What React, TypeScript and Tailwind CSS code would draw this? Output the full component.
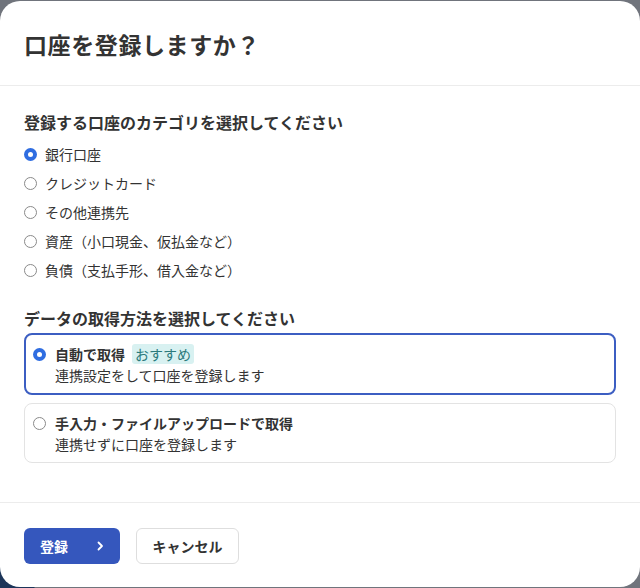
import React from 'react';

const font = { fontFamily: '"Noto Sans CJK JP", "Noto Sans", sans-serif' };

const Radio: React.FC<{ checked?: boolean }> = ({ checked }) => (
  <span
    className={
      checked
        ? 'flex h-[13px] w-[13px] shrink-0 items-center justify-center rounded-full bg-[#2f6de1]'
        : 'flex h-[13px] w-[13px] shrink-0 items-center justify-center rounded-full border border-[#8a8a8a] bg-white'
    }
  >
    {checked && <span className="h-[5px] w-[5px] rounded-full bg-white" />}
  </span>
);

const categories = [
  '銀行口座',
  'クレジットカード',
  'その他連携先',
  '資産（小口現金、仮払金など）',
  '負債（支払手形、借入金など）',
];

const App: React.FC = () => {
  return (
    <div
      className="h-[588px] w-[640px] bg-[radial-gradient(circle_at_0%_100%,#1c3559_34px,#70747c_35px)] pt-px"
      style={font}
    >
      <div className="flex h-[586px] flex-col rounded-[20px] bg-white text-[#333]">
        <div className="border-b border-[#ececec] px-6 pb-[23px] pt-[25px]">
          <h1 className="text-[23px] font-bold leading-[36px] tracking-[0.6px]">口座を登録しますか？</h1>
        </div>

        <div className="flex-1 px-6 pt-[24px]">
          <h2 className="text-[16px] font-bold leading-[24px]">登録する口座のカテゴリを選択してください</h2>
          <div className="mt-[6px] flex flex-col">
            {categories.map((c, i) => (
              <label key={c} className="flex h-[29px] items-center gap-[8px] text-[14px]">
                <Radio checked={i === 0} />
                <span>{c}</span>
              </label>
            ))}
          </div>

          <h2 className="mt-[21px] text-[16px] font-bold leading-[24px]">データの取得方法を選択してください</h2>
          <div className="mt-[3px] flex flex-col gap-[8px]">
            <div className="flex h-[62px] gap-[9px] rounded-[8px] border-2 border-[#3c5ec2] px-[7px] pt-[9px]">
              <div className="pt-[4px]">
                <Radio checked />
              </div>
              <div>
                <div className="flex items-center gap-[7px]">
                  <span className="text-[14px] font-bold leading-[20px]">自動で取得</span>
                  <span className="rounded-[3px] bg-[#d8f1f1] px-[3px] text-[14px] leading-[20px] text-[#2b7a7c]">
                    おすすめ
                  </span>
                </div>
                <div className="mt-px text-[14px] leading-[20px]">連携設定をして口座を登録します</div>
              </div>
            </div>

            <div className="flex h-[60px] gap-[9px] rounded-[8px] border border-[#e3e3e3] px-[8px] pt-[9px]">
              <div className="pt-[4px]">
                <Radio />
              </div>
              <div>
                <div className="text-[14px] font-bold leading-[20px]">手入力・ファイルアップロードで取得</div>
                <div className="mt-px text-[14px] leading-[20px]">連携せずに口座を登録します</div>
              </div>
            </div>
          </div>
        </div>

        <div className="flex h-[85px] items-start gap-4 border-t border-[#ececec] px-6 pt-[25px]">
          <button className="flex h-[36px] w-[96px] items-center justify-between rounded-[6px] bg-[#3557bd] pl-[16px] pr-[14px] text-[14px] font-bold text-white">
            <span>登録</span>
            <svg width="12" height="12" viewBox="0 0 12 12" fill="none">
              <path d="M4.5 2.5L8 6l-3.5 3.5" stroke="white" strokeWidth="1.8" strokeLinecap="round" strokeLinejoin="round" />
            </svg>
          </button>
          <button className="h-[36px] w-[103px] rounded-[6px] border border-[#dedede] bg-white text-[14px] font-bold text-[#333]">
            キャンセル
          </button>
        </div>
      </div>
    </div>
  );
};

export default App;
